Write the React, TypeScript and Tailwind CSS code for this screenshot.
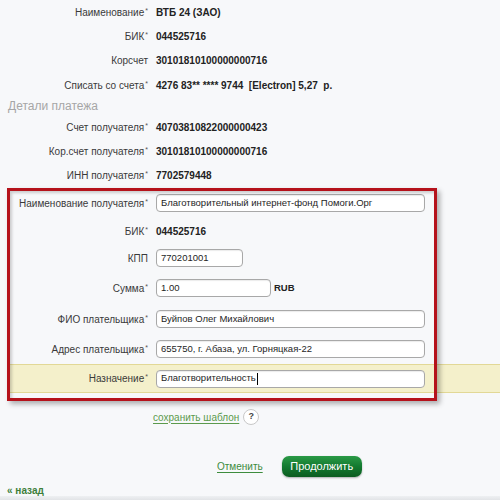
import type { ReactNode } from "react";

const font = { fontFamily: '"Liberation Sans", Arial, sans-serif' };

function Label({ children, req }: { children: ReactNode; req?: boolean }) {
  return (
    <div className="w-[149px] shrink-0 pr-[1px] text-right text-[10px] text-[#3a3a3a]">
      {children}
      {req && <span className="relative -top-[3px] ml-[1px] text-[7px] text-[#555]">*</span>}
    </div>
  );
}

function Row({ h, label, req, children }: { h: string; label: string; req?: boolean; children: ReactNode }) {
  return (
    <div className={`flex items-center gap-[7px] ${h}`}>
      <Label req={req}>{label}</Label>
      {children}
    </div>
  );
}

function Value({ children }: { children: ReactNode }) {
  return <div className="text-[10px] font-bold text-[#222]">{children}</div>;
}

function Input({ w, children }: { w: string; children: ReactNode }) {
  return (
    <div
      className={`flex h-[18px] items-center rounded-[4px] border border-[#a8a8a8] bg-white pl-[4px] text-[9.5px] text-[#1e1e1e] shadow-[inset_0_1px_1px_rgba(0,0,0,0.08)] ${w}`}
    >
      {children}
    </div>
  );
}

export default function App() {
  return (
    <div style={font} className="relative h-[500px] w-[500px] overflow-hidden bg-[#f7f8fa]">
      <div className="flex flex-col">
        <Row h="h-[24px]" label="Наименование" req>
          <Value>ВТБ 24 (ЗАО)</Value>
        </Row>
        <Row h="h-[24px]" label="БИК" req>
          <Value>044525716</Value>
        </Row>
        <Row h="h-[25px]" label="Корсчет">
          <Value>30101810100000000716</Value>
        </Row>
        <Row h="h-[24px]" label="Списать со счета" req>
          <Value>4276 83** **** 9744 &nbsp;[Electron] 5,27&nbsp; р.</Value>
        </Row>
        <div className="flex h-[18px] items-center pl-[8px] text-[12px] text-[#a6a6a6]">Детали платежа</div>
        <Row h="h-[24px]" label="Счет получателя" req>
          <Value>40703810822000000423</Value>
        </Row>
        <Row h="h-[24px]" label="Кор.счет получателя" req>
          <Value>30101810100000000716</Value>
        </Row>
        <Row h="h-[25px]" label="ИНН получателя" req>
          <Value>7702579448</Value>
        </Row>

        <div className="relative flex flex-col">
          <Row h="h-[30px]" label="Наименование получателя" req>
            <Input w="w-[269px]">Благотворительный интернет-фонд Помоги.Орг</Input>
          </Row>
          <Row h="h-[26px]" label="БИК" req>
            <Value>044525716</Value>
          </Row>
          <Row h="h-[28px]" label="КПП">
            <Input w="w-[87px]">770201001</Input>
          </Row>
          <Row h="h-[32px]" label="Сумма" req>
            <Input w="w-[115px]">1.00</Input>
            <span className="-ml-[4px] text-[9.5px] font-bold text-[#222]">RUB</span>
          </Row>
          <Row h="h-[30px]" label="ФИО плательщика" req>
            <Input w="w-[269px]">Буйпов Олег Михайлович</Input>
          </Row>
          <Row h="h-[30px]" label="Адрес плательщика" req>
            <Input w="w-[269px]">655750, г. Абаза, ул. Горняцкая-22</Input>
          </Row>
          <div className="ml-[8px] border-y border-[#e2d896] bg-[#f4f0cb]">
            <div className="-ml-[8px]">
              <Row h="h-[27px]" label="Назначение" req>
                <Input w="w-[269px]">
                  Благотворительность
                  <span className="ml-[1px] inline-block h-[12px] w-px bg-black" />
                </Input>
              </Row>
            </div>
          </div>

          <div className="pointer-events-none absolute left-[7px] top-0 h-[213px] w-[430px] border-[3px] border-[#b5121b] shadow-[3px_3px_5px_rgba(0,0,0,0.3),inset_2px_2px_3px_rgba(0,0,0,0.18)]" />
        </div>

        <div className="mt-[12px] flex h-[24px] items-center gap-[4px] pl-[153px]">
          <a href="#" className="text-[10px] text-[#5b9a4c] underline underline-offset-2">
            сохранить шаблон
          </a>
          <span className="flex h-[16px] w-[16px] items-center justify-center rounded-full border border-[#c8c8c8] bg-white text-[9px] font-bold text-[#444]">
            ?
          </span>
        </div>

        <div className="mt-[26px] flex h-[22px] items-center pl-[217px]">
          <a href="#" className="text-[10px] text-[#3d8c3d] underline underline-offset-2">
            Отменить
          </a>
          <button className="ml-[19px] h-[21px] w-[80px] rounded-[7px] bg-gradient-to-b from-[#2a9a46] via-[#137a30] to-[#0b5c20] text-[11px] text-white shadow-[0_1px_2px_rgba(0,0,0,0.3)]">
            Продолжить
          </button>
        </div>

        <div className="mt-[5px] flex h-[16px] items-center pl-[7px]">
          <a href="#" className="text-[10px] font-bold text-[#3e7f3a] underline underline-offset-2">
            « назад
          </a>
        </div>
      </div>
      <div className="absolute bottom-0 left-0 h-[4px] w-full bg-gradient-to-b from-[#eef0f2] to-[#e2e4e7]" />
    </div>
  );
}
